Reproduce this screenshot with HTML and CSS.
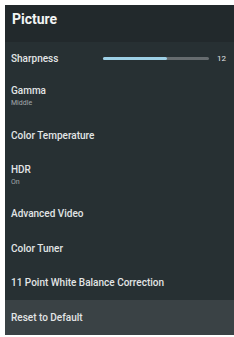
FILE: index.html
```html
<!DOCTYPE html>
<html lang="en">
<head>
    <meta charset="UTF-8">
    <meta name="viewport" content="width=device-width, initial-scale=1.0">
    <title>Picture</title>
    <link rel="stylesheet" href="styles.css">
</head>
<body>
    <div class="panel">
        <div class="panel-header">Picture</div>

        <div class="row row-slider">
            <div class="row-title">Sharpness</div>
            <div class="slider">
                <div class="slider-fill" style="width: 60%"></div>
            </div>
            <div class="slider-value">12</div>
        </div>

        <div class="row row-double">
            <div class="row-title">Gamma</div>
            <div class="row-sub">Middle</div>
        </div>

        <div class="row">
            <div class="row-title">Color Temperature</div>
        </div>

        <div class="row row-double">
            <div class="row-title">HDR</div>
            <div class="row-sub">On</div>
        </div>

        <div class="row">
            <div class="row-title">Advanced Video</div>
        </div>

        <div class="row">
            <div class="row-title">Color Tuner</div>
        </div>

        <div class="row">
            <div class="row-title">11 Point White Balance Correction</div>
        </div>

        <div class="row row-active">
            <div class="row-title">Reset to Default</div>
        </div>
    </div>
</body>
</html>
```

FILE: styles.css
```css
body {
    margin: 0;
    padding: 5px 0 0 5px;
    background: #ffffff;
    font-family: Roboto, "Liberation Sans", sans-serif;
}
.panel {
    background-color: #273033;
    color: #e6e9ea;
    height: 330px;
    overflow: hidden;
}
.panel-header {
    height: 37px;
    box-sizing: border-box;
    padding: 6px 0 0 7px;
    background-color: #22292c;
    font-size: 14px;
    font-weight: bold;
    color: #f2f4f4;
}
.row {
    height: 34.5px;
    box-sizing: border-box;
    padding: 0 8px 0 6px;
    display: flex;
    flex-direction: column;
    justify-content: center;
}
.row-slider {
    height: 32px;
    flex-direction: row;
    align-items: center;
    justify-content: flex-start;
}
.row-double {
    height: 44px;
}
.row-active {
    background-color: #3a4245;
}
.row-title {
    font-size: 10px;
    font-weight: 500;
    color: #e2e5e6;
}
.row-sub {
    font-size: 7px;
    color: #a3a9ab;
    margin-top: 3px;
}
.slider {
    width: 106px;
    height: 3px;
    margin-left: 45px;
    background-color: #666c6f;
    border-radius: 2px;
}
.slider-fill {
    height: 100%;
    background-color: #9dd0e6;
    border-radius: 2px;
}
.slider-value {
    margin-left: 8px;
    font-size: 8px;
    color: #e2e5e6;
}
```
